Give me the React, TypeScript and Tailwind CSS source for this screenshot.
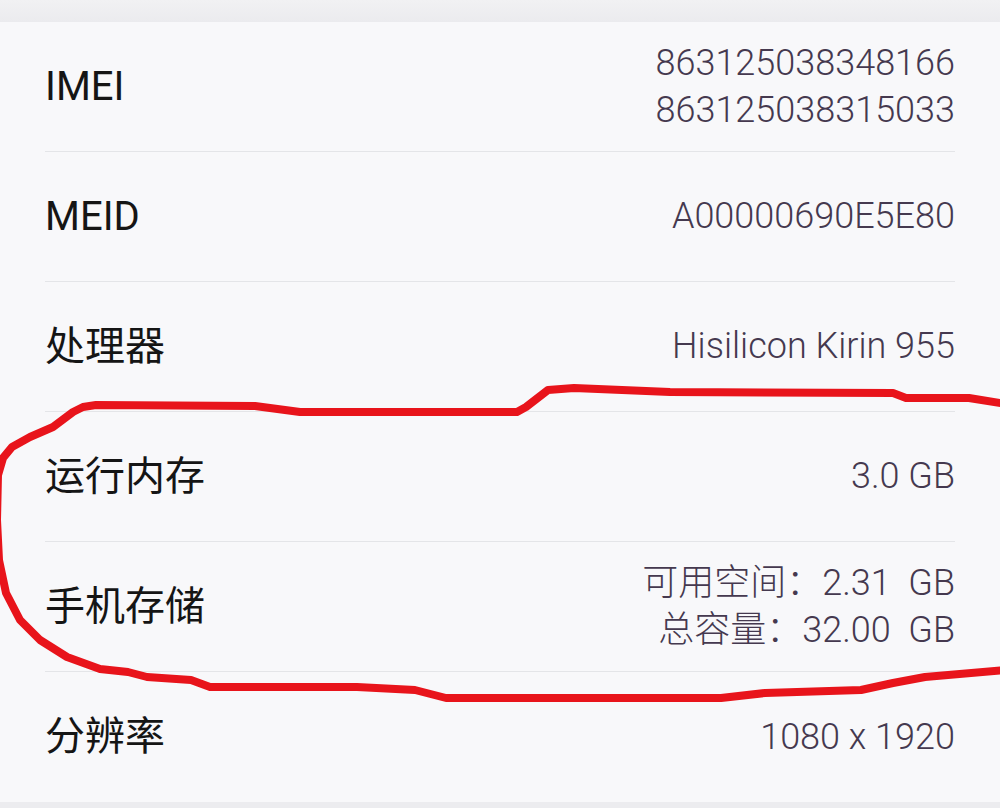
import React from 'react'

type Row = { label: string; values: string[] }

const rows: Row[] = [
  { label: 'IMEI', values: ['863125038348166', '863125038315033'] },
  { label: 'MEID', values: ['A00000690E5E80'] },
  { label: '处理器', values: ['Hisilicon Kirin 955'] },
  { label: '运行内存', values: ['3.0 GB'] },
  { label: '手机存储', values: ['可用空间：2.31  GB', '总容量：32.00  GB'] },
  { label: '分辨率', values: ['1080 x 1920'] },
]

const font = { fontFamily: 'Roboto, "Noto Sans CJK SC", sans-serif' }

// hand-drawn red circle around the memory rows
const circle =
  'M1006,404 L969,398 L906,398 L893,393 L670,392 L574,388 L548,390 L526,407 L517,412 L300,412 L255,406 L96,405 L83,407 L73,412 L53,427 L30,437 L12,447 L3,458 L-2,475 L-3,520 L-1,560 L6,593 L20,620 L40,640 L67,657 L100,669 L128,672 L147,677 L191,680 L210,687 L357,687 L415,690 L446,698 L721,698 L765,693 L861,690 L893,683 L925,677 L1006,670'

export default function App() {
  return (
    <div className="relative w-[1000px] h-[808px] bg-[#f8f8fa] overflow-hidden" style={font}>
      <div className="h-[22px] bg-gradient-to-b from-[#f1f1f3] to-[#ebebee]" />
      {rows.map((row, i) => (
        <div key={row.label} className="px-[45px]">
          <div
            className={`h-[130px] flex items-center justify-between ${
              i < rows.length - 1 ? 'border-b border-[#e4e5e8]' : ''
            }`}
          >
            <span className="text-[40px] text-[#151515] leading-none">{row.label}</span>
            <div className="flex flex-col items-end text-[36px] font-light leading-[47px] text-[#45394f]">
              {row.values.map(v => (
                <span key={v} className="whitespace-pre">{v}</span>
              ))}
            </div>
          </div>
        </div>
      ))}
      <div className="h-[6px] bg-[#ececef]" />
      <svg className="absolute inset-0 pointer-events-none" width="1000" height="808" viewBox="0 0 1000 808">
        <path
          d={circle}
          fill="none"
          stroke="#e8141b"
          strokeWidth="8"
          strokeLinejoin="round"
          strokeLinecap="round"
        />
      </svg>
    </div>
  )
}
